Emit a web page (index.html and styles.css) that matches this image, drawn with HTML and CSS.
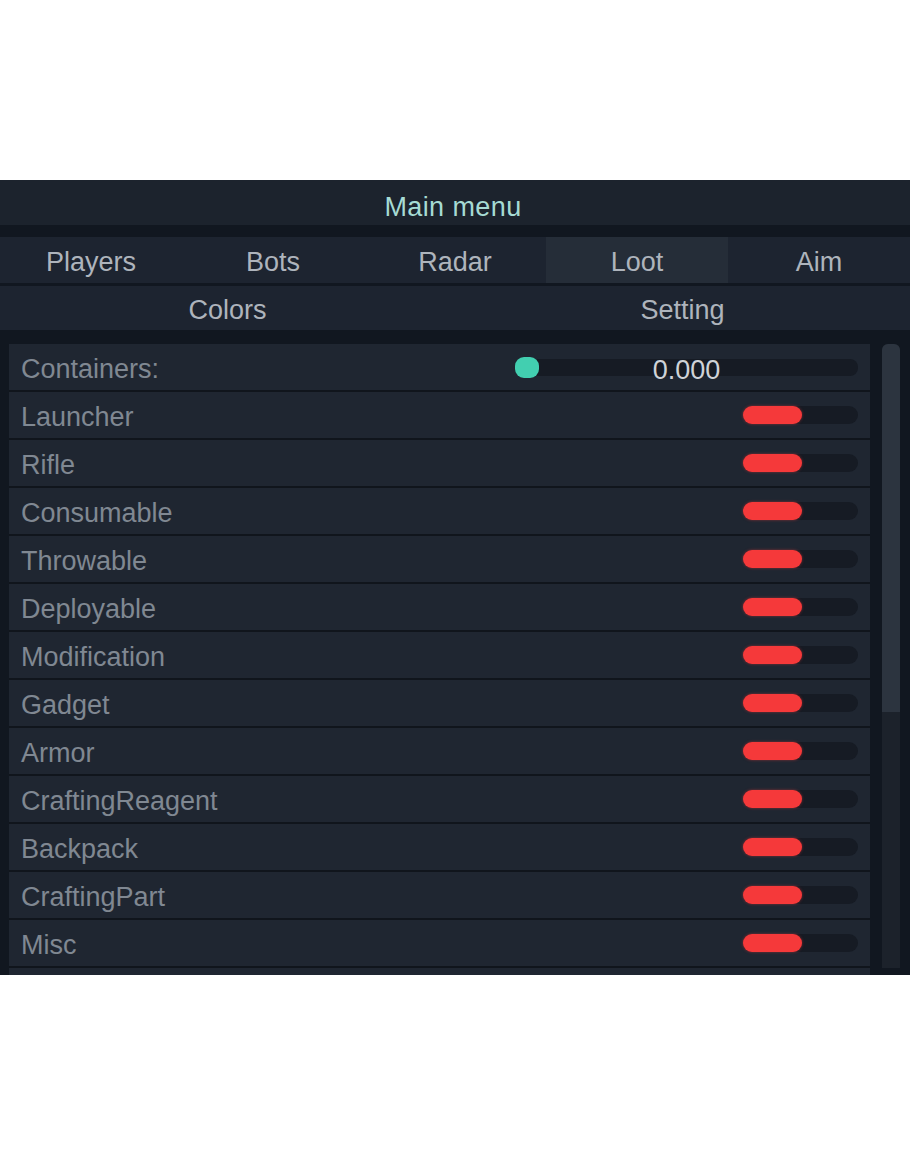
FILE: index.html
```html
<!DOCTYPE html>
<html>
<head>
<meta charset="utf-8">
<link rel="stylesheet" href="styles.css">
</head>
<body>
<div class="panel">
  <div class="title"><span class="title-text">Main menu</span></div>
  <div class="tabs tabs5">
    <div class="tab">Players</div>
    <div class="tab">Bots</div>
    <div class="tab">Radar</div>
    <div class="tab active">Loot</div>
    <div class="tab">Aim</div>
  </div>
  <div class="tabs tabs2">
    <div class="tab">Colors</div>
    <div class="tab">Setting</div>
  </div>
  <div class="content">
    <div class="list">
      <div class="row">
        <span class="label">Containers:</span>
        <div class="slider"><span class="knob-teal"></span><span class="value">0.000</span></div>
      </div>
      <div class="row"><span class="label">Launcher</span><div class="toggle"><span class="knob"></span></div></div>
      <div class="row"><span class="label">Rifle</span><div class="toggle"><span class="knob"></span></div></div>
      <div class="row"><span class="label">Consumable</span><div class="toggle"><span class="knob"></span></div></div>
      <div class="row"><span class="label">Throwable</span><div class="toggle"><span class="knob"></span></div></div>
      <div class="row"><span class="label">Deployable</span><div class="toggle"><span class="knob"></span></div></div>
      <div class="row"><span class="label">Modification</span><div class="toggle"><span class="knob"></span></div></div>
      <div class="row"><span class="label">Gadget</span><div class="toggle"><span class="knob"></span></div></div>
      <div class="row"><span class="label">Armor</span><div class="toggle"><span class="knob"></span></div></div>
      <div class="row"><span class="label">CraftingReagent</span><div class="toggle"><span class="knob"></span></div></div>
      <div class="row"><span class="label">Backpack</span><div class="toggle"><span class="knob"></span></div></div>
      <div class="row"><span class="label">CraftingPart</span><div class="toggle"><span class="knob"></span></div></div>
      <div class="row"><span class="label">Misc</span><div class="toggle"><span class="knob"></span></div></div>
      <div class="row"></div>
    </div>
    <div class="scroll"><div class="thumb"></div></div>
  </div>
</div>
</body>
</html>
```
FILE: styles.css
```css
html, body {
  margin: 0;
  padding: 0;
  background: #ffffff;
}
body {
  font-family: "Liberation Sans", Arial, sans-serif;
}
.panel {
  margin-top: 180px;
  width: 910px;
  height: 795px;
  overflow: hidden;
  background: #111720;
  display: flex;
  flex-direction: column;
}
.title {
  height: 45px;
  flex: none;
  background: #1c232d;
  color: #a6dbd4;
  font-size: 27px;
  display: flex;
  align-items: center;
  justify-content: center;
  margin-bottom: 12px;
}
.title-text {
  padding-top: 9px;
  padding-right: 4px;
  letter-spacing: 0.4px;
}
.tabs {
  display: grid;
  flex: none;
  background: #1d2430;
}
.tabs5 {
  grid-template-columns: repeat(5, 1fr);
  height: 46px;
  margin-bottom: 3px;
}
.tabs2 {
  grid-template-columns: repeat(2, 1fr);
  height: 44px;
  margin-bottom: 14px;
}
.tab {
  display: flex;
  align-items: center;
  justify-content: center;
  color: #aeb4bc;
  font-size: 27px;
  padding-top: 5px;
}
.tab.active {
  background: #252d38;
}
.content {
  flex: 1;
  display: flex;
  padding-left: 9px;
  min-height: 0;
}
.list {
  width: 861px;
  display: flex;
  flex-direction: column;
  gap: 2px;
  background: #10151c;
}
.row {
  flex: none;
  height: 46px;
  background: #1f2631;
  display: flex;
  align-items: center;
  justify-content: space-between;
  padding: 0 12px;
}
.label {
  color: #808892;
  font-size: 27px;
  padding-top: 5px;
}
.toggle {
  width: 115px;
  height: 18px;
  border-radius: 9px;
  background: #161b24;
  display: flex;
}
.knob {
  width: 59px;
  height: 18px;
  border-radius: 9px;
  background: #f5393a;
  box-shadow: 0 0 3px rgba(245, 57, 58, 0.5);
}
.slider {
  width: 343px;
  height: 17px;
  border-radius: 8px;
  background: #161b24;
  display: flex;
  align-items: center;
  justify-content: center;
  position: relative;
}
.knob-teal {
  position: absolute;
  left: 0;
  top: -2px;
  width: 24px;
  height: 21px;
  border-radius: 9px;
  background: #42cfb0;
}
.value {
  color: #cfd3d8;
  font-size: 27px;
  line-height: 17px;
  padding-top: 6px;
}
.scroll {
  margin-left: 12px;
  width: 18px;
  height: 624px;
  background: #1c222b;
  border-radius: 6px 6px 0 0;
  display: flex;
  flex-direction: column;
}
.thumb {
  height: 368px;
  background: #2c343f;
  border-radius: 6px 6px 0 0;
}
```
